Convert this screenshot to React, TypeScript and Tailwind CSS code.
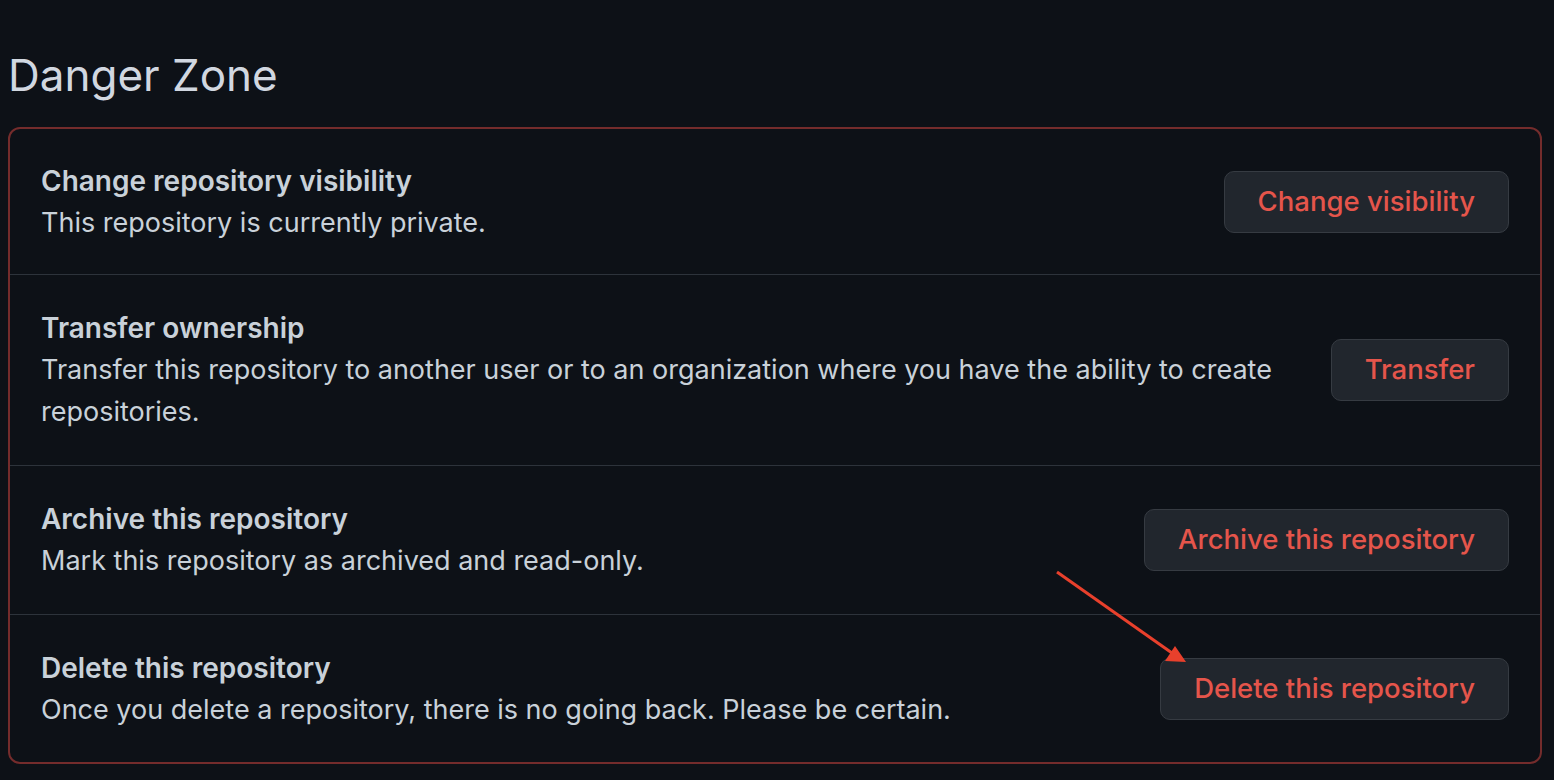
import React from "react";

const rows = [
  {
    title: "Change repository visibility",
    desc: "This repository is currently private.",
    action: "Change visibility",
  },
  {
    title: "Transfer ownership",
    desc: "Transfer this repository to another user or to an organization where you have the ability to create repositories.",
    action: "Transfer",
  },
  {
    title: "Archive this repository",
    desc: "Mark this repository as archived and read-only.",
    action: "Archive this repository",
  },
  {
    title: "Delete this repository",
    desc: "Once you delete a repository, there is no going back. Please be certain.",
    action: "Delete this repository",
  },
];

export default function App() {
  return (
    <div
      className="min-h-[780px] w-full bg-[#0d1117] text-[#c9d1d9] pl-2 pr-3 pt-[45px] relative"
      style={{ fontFamily: "Inter, 'Noto Sans', sans-serif" }}
    >
      <h2 className="text-[44px] leading-[60px] font-normal text-[#d1d7e0]">
        Danger Zone
      </h2>

      <div className="mt-[22px] rounded-xl border-2 border-[#742c2c]">
        {rows.map((r, i) => (
          <div
            key={r.title}
            className={`flex items-center gap-8 pl-[31px] pr-[31px] ${
              i > 0 ? "border-t border-[#2d333b] py-8" : "pt-[31px] pb-[30px]"
            } ${i === rows.length - 1 ? "pb-[31px]" : ""}`}
          >
            <div className="flex-1 min-w-0">
              <div className="text-[28px] leading-[42px] font-semibold">{r.title}</div>
              <div className="text-[27px] leading-[42px]">{r.desc}</div>
            </div>
            <button className="shrink-0 h-[62px] px-[33px] rounded-[10px] bg-[#21262d] border border-[#363b42] text-[#e5554b] text-[27.5px] font-medium">
              {r.action}
            </button>
          </div>
        ))}
      </div>

      {/* annotation arrow */}
      <svg
        className="absolute left-0 top-0 pointer-events-none"
        width="1554"
        height="780"
        viewBox="0 0 1554 780"
      >
        <line x1="1057" y1="572" x2="1172" y2="653" stroke="#e8402c" strokeWidth="3" />
        <polygon points="1186,662 1165,661 1175,646" fill="#e8402c" />
      </svg>
    </div>
  );
}
